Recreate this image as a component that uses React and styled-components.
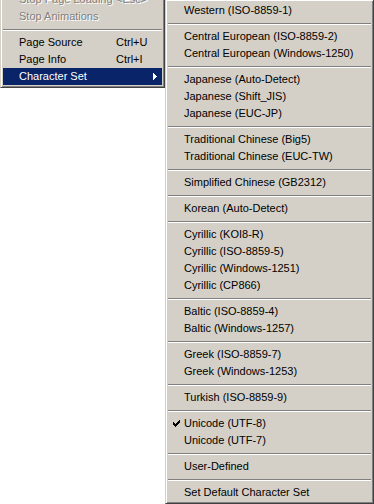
import React from "react";
import styled, { createGlobalStyle } from "styled-components";

const Global = createGlobalStyle`
  html, body { margin: 0; padding: 0; background: #ffffff; }
  body { font-family: "Liberation Sans", Arial, sans-serif; font-size: 11px; overflow: hidden; }
  #root { width: 374px; height: 504px; overflow: hidden; }
`;

const Screen = styled.div`
  display: flex;
  align-items: flex-start;
  width: 374px;
  height: 504px;
  overflow: hidden;
`;

const Menu = styled.div`
  box-sizing: border-box;
  flex: none;
  width: ${(p) => p.$width}px;
  margin-top: ${(p) => p.$top}px;
  background: #d4d0c8;
  border: 1px solid;
  border-color: #d4d0c8 #404040 #404040 #d4d0c8;
  box-shadow: inset 1px 1px 0 #ffffff, inset -1px -1px 0 #808080;
  padding: 2px;
  display: flex;
  flex-direction: column;
`;

const Item = styled.div`
  display: grid;
  grid-template-columns: ${(p) => p.$cols};
  align-items: center;
  height: 17px;
  line-height: 17px;
  white-space: nowrap;
  color: ${(p) => (p.$active ? "#ffffff" : p.$disabled ? "#808080" : "#000000")};
  background: ${(p) => (p.$active ? "#0a246a" : "transparent")};
  text-shadow: ${(p) => (p.$disabled ? "1px 1px 0 #ffffff" : "none")};
`;

const Gutter = styled.span`
  display: flex;
  align-items: center;
  justify-content: center;
  height: 17px;
  padding-left: 1px;
`;

const Label = styled.span`
  overflow: visible;
`;

const Shortcut = styled.span``;

const ArrowCell = styled.span`
  display: flex;
  align-items: center;
  justify-content: flex-start;
  height: 17px;
`;

const Separator = styled.div`
  height: 0;
  margin: 4px 0 3px;
  border-top: 1px solid #808080;
  border-bottom: 1px solid #ffffff;
`;

const Check = () => (
  <svg width="7" height="7" viewBox="0 0 7 7" shapeRendering="crispEdges">
    <rect x="6" y="0" width="1" height="3" fill="#000" />
    <rect x="5" y="1" width="1" height="3" fill="#000" />
    <rect x="4" y="2" width="1" height="3" fill="#000" />
    <rect x="3" y="3" width="1" height="3" fill="#000" />
    <rect x="2" y="4" width="1" height="3" fill="#000" />
    <rect x="1" y="3" width="1" height="3" fill="#000" />
    <rect x="0" y="2" width="1" height="3" fill="#000" />
  </svg>
);

const Arrow = () => (
  <svg width="4" height="7" viewBox="0 0 4 7" shapeRendering="crispEdges">
    <polygon points="0,0 4,3.5 0,7" fill="#ffffff" />
  </svg>
);

const leftCols = "16px 97px 1fr 9px";
const subCols = "16px 1fr";

const leftItems = [
  { label: "Stop Page Loading", shortcut: "<Esc>", disabled: true },
  { label: "Stop Animations", disabled: true },
  { sep: true },
  { label: "Page Source", shortcut: "Ctrl+U" },
  { label: "Page Info", shortcut: "Ctrl+I" },
  { label: "Character Set", active: true, sub: true },
];

const groups = [
  ["Western (ISO-8859-1)"],
  ["Central European (ISO-8859-2)", "Central European (Windows-1250)"],
  ["Japanese (Auto-Detect)", "Japanese (Shift_JIS)", "Japanese (EUC-JP)"],
  ["Traditional Chinese (Big5)", "Traditional Chinese (EUC-TW)"],
  ["Simplified Chinese (GB2312)"],
  ["Korean (Auto-Detect)"],
  ["Cyrillic (KOI8-R)", "Cyrillic (ISO-8859-5)", "Cyrillic (Windows-1251)", "Cyrillic (CP866)"],
  ["Baltic (ISO-8859-4)", "Baltic (Windows-1257)"],
  ["Greek (ISO-8859-7)", "Greek (Windows-1253)"],
  ["Turkish (ISO-8859-9)"],
  ["Unicode (UTF-8)", "Unicode (UTF-7)"],
  ["User-Defined"],
  ["Set Default Character Set"],
];

export default function App() {
  return (
    <>
      <Global />
      <Screen>
        <Menu $width={165} $top={-12}>
          {leftItems.map((it, i) =>
            it.sep ? (
              <Separator key={i} />
            ) : (
              <Item key={i} $cols={leftCols} $active={it.active} $disabled={it.disabled}>
                <Gutter />
                <Label>{it.label}</Label>
                <Shortcut>{it.shortcut || ""}</Shortcut>
                <ArrowCell>{it.sub ? <Arrow /> : null}</ArrowCell>
              </Item>
            )
          )}
        </Menu>
        <Menu $width={209} $top={-1}>
          {groups.map((g, gi) => (
            <React.Fragment key={gi}>
              {gi > 0 && <Separator />}
              {g.map((label) => (
                <Item key={label} $cols={subCols}>
                  <Gutter>{label === "Unicode (UTF-8)" ? <Check /> : null}</Gutter>
                  <Label>{label}</Label>
                </Item>
              ))}
            </React.Fragment>
          ))}
        </Menu>
      </Screen>
    </>
  );
}
